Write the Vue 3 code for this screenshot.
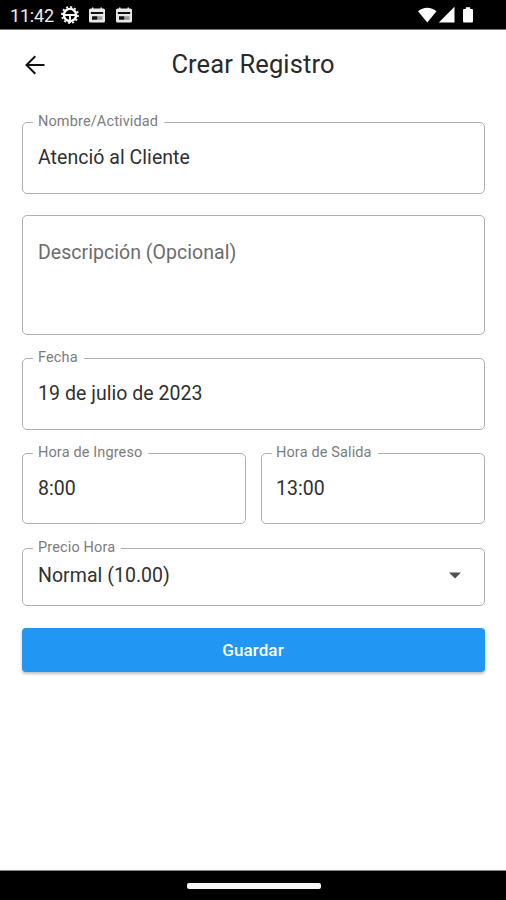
<script setup>
const times = [
  { label: 'Hora de Ingreso', value: '8:00', kind: 'entry' },
  { label: 'Hora de Salida', value: '13:00', kind: 'exit' },
]
</script>

<template>
  <div class="screen">
    <header class="status">
      <span class="clock">11:42</span>
      <svg class="gear" width="20" height="20" viewBox="0 0 20 20">
        <circle cx="10" cy="10" r="8" fill="none" stroke="#eee" stroke-width="1.8" stroke-dasharray="2.09 2.09" />
        <circle cx="10" cy="10" r="6.1" fill="none" stroke="#fff" stroke-width="2.4" />
        <path d="M4.500 10h11M10 10v8" stroke="#fff" stroke-width="1.8" />
      </svg>
      <svg v-for="n in 2" :key="n" class="news" width="18" height="17" viewBox="0 0 18 17">
        <path d="M1 3Q1 1.500 2.500 1.500H4V.5h1.500v1h7v-1H14v1h1.500Q17 1.500 17 3v11q0 1.500-1.500 1.500h-13Q1 15.500 1 14z" fill="#e8e8e8" />
        <path d="M2.800 5h12.400v2H2.800zM4 9.300h5.500v3.500H4z" fill="#111" />
        <path d="M9.500 9.300h5v3.500h-5z" fill="#999" />
      </svg>
      <span class="spacer"></span>
      <svg width="57" height="18" viewBox="0 0 57 18">
        <path d="M.5 5.300C5.800.6 13.700.6 19 5.300L9.800 16.500zM37 .8V16.500H21.300zM46.500 16.500q-1 0-1-1V4q0-1 1-1h1.800V1.200h4.400V3h1.800q1 0 1 1v11.500q0 1-1 1z" transform="translate(-.5 0)" fill="#fff" />
      </svg>
    </header>

    <nav class="appbar">
      <svg class="back" width="20" height="20" viewBox="0 0 20 20">
        <path d="M19.500 10H2M10.300 1.200L1.500 10l8.800 8.800" fill="none" stroke="#111" stroke-width="2" />
      </svg>
      <h1>Crear Registro</h1>
    </nav>

    <main class="form">
      <fieldset class="field name">
        <legend>Nombre/Actividad</legend>
        <span class="value">Atenció al Cliente</span>
      </fieldset>
      <div class="field description">
        <span class="value">Descripción (Opcional)</span>
      </div>
      <fieldset class="field date">
        <legend>Fecha</legend>
        <span class="value">19 de julio de 2023</span>
      </fieldset>
      <div class="times">
        <fieldset v-for="t in times" :key="t.kind" class="field time" :class="t.kind">
          <legend>{{ t.label }}</legend>
          <span class="value">{{ t.value }}</span>
        </fieldset>
      </div>
      <fieldset class="field price">
        <legend>Precio Hora</legend>
        <div class="select">
          <span class="value">Normal (10.00)</span>
          <svg width="12" height="7" viewBox="0 0 12 7"><path d="M0 .5h12L6 6.500z" fill="#505050" /></svg>
        </div>
      </fieldset>
      <button class="save" type="button">Guardar</button>
    </main>

    <footer class="navbar"><span class="handle"></span></footer>
  </div>
</template>

<style>
body { background: #fff; }
</style>

<style scoped>
.screen {
  display: flex;
  flex-direction: column;
  width: 506px;
  height: 900px;
  background: #fff;
  font-family: Roboto, "Liberation Sans", sans-serif;
  overflow: hidden;
}
.status {
  box-sizing: border-box;
  flex: none;
  display: flex;
  align-items: center;
  height: 30px;
  padding: 1px 31px 0 10px;
  background: #000;
  border-bottom: 1px solid #777;
}
.clock { width: 50px; color: #eee; font-size: 18px; letter-spacing: -0.2px; white-space: nowrap; }
.news { margin-left: 8px; }
.news + .news { margin-left: 9px; }
.spacer { flex: 1; }
.appbar {
  flex: none;
  display: flex;
  align-items: center;
  height: 69px;
  padding: 0 25px;
}
.back { flex: none; }
h1 {
  flex: 1;
  margin: 0 20px 2px 0;
  text-align: center;
  font-size: 25.5px;
  font-weight: 400;
  line-height: 30px;
  letter-spacing: 0.12px;
  color: #2a2a2a;
}
.form { flex: 1; display: flex; flex-direction: column; padding: 16px 21px 0 22px; }
.field {
  box-sizing: border-box;
  min-width: 0;
  margin: 0;
  padding: 0 10px;
  border: 1px solid #b0b0b0;
  border-radius: 5px;
}
legend {
  height: 14px;
  padding: 0 6px 0 5px;
  font-size: 14.5px;
  line-height: 14px;
  letter-spacing: 0.13px;
  color: #7c7c7c;
  white-space: nowrap;
}
.value {
  display: block;
  padding-left: 5px;
  font-size: 19.5px;
  line-height: 24px;
  letter-spacing: 0.04px;
  color: #303030;
  white-space: nowrap;
}
.name { height: 79px; }
.name .value, .date .value, .time .value { margin-top: 17px; }
.description { height: 120px; margin-top: 21px; padding-top: 25px; }
.description .value { color: #6c6c6c; }
.date { height: 79px; margin-top: 16px; }
.times { display: flex; gap: 15px; margin-top: 16px; }
.time { flex: 1; height: 78px; }
.exit .value { padding-left: 4px; }
.exit legend { padding-left: 4px; }
.price { height: 65px; margin-top: 17px; }
.select { display: flex; align-items: center; justify-content: space-between; margin-top: 9px; padding-right: 13px; }
.select svg { margin-bottom: 2px; }
.save {
  height: 44px;
  margin-top: 22px;
  border: 0;
  border-radius: 4px;
  background: #2196f3;
  box-shadow: 0 2px 3px rgba(0, 0, 0, 0.25);
  color: #fff;
  font: 500 17px/44px Roboto, sans-serif;
  letter-spacing: 0.1px;
  padding: 0 1px 0 0;
}
.navbar {
  box-sizing: border-box;
  flex: none;
  display: flex;
  justify-content: center;
  height: 30px;
  padding: 12px 0 0 1px;
  border-top: 1px solid #888;
  background: #000;
}
.handle { width: 134px; height: 6px; border-radius: 2px; background: #f7f7f7; }
</style>
